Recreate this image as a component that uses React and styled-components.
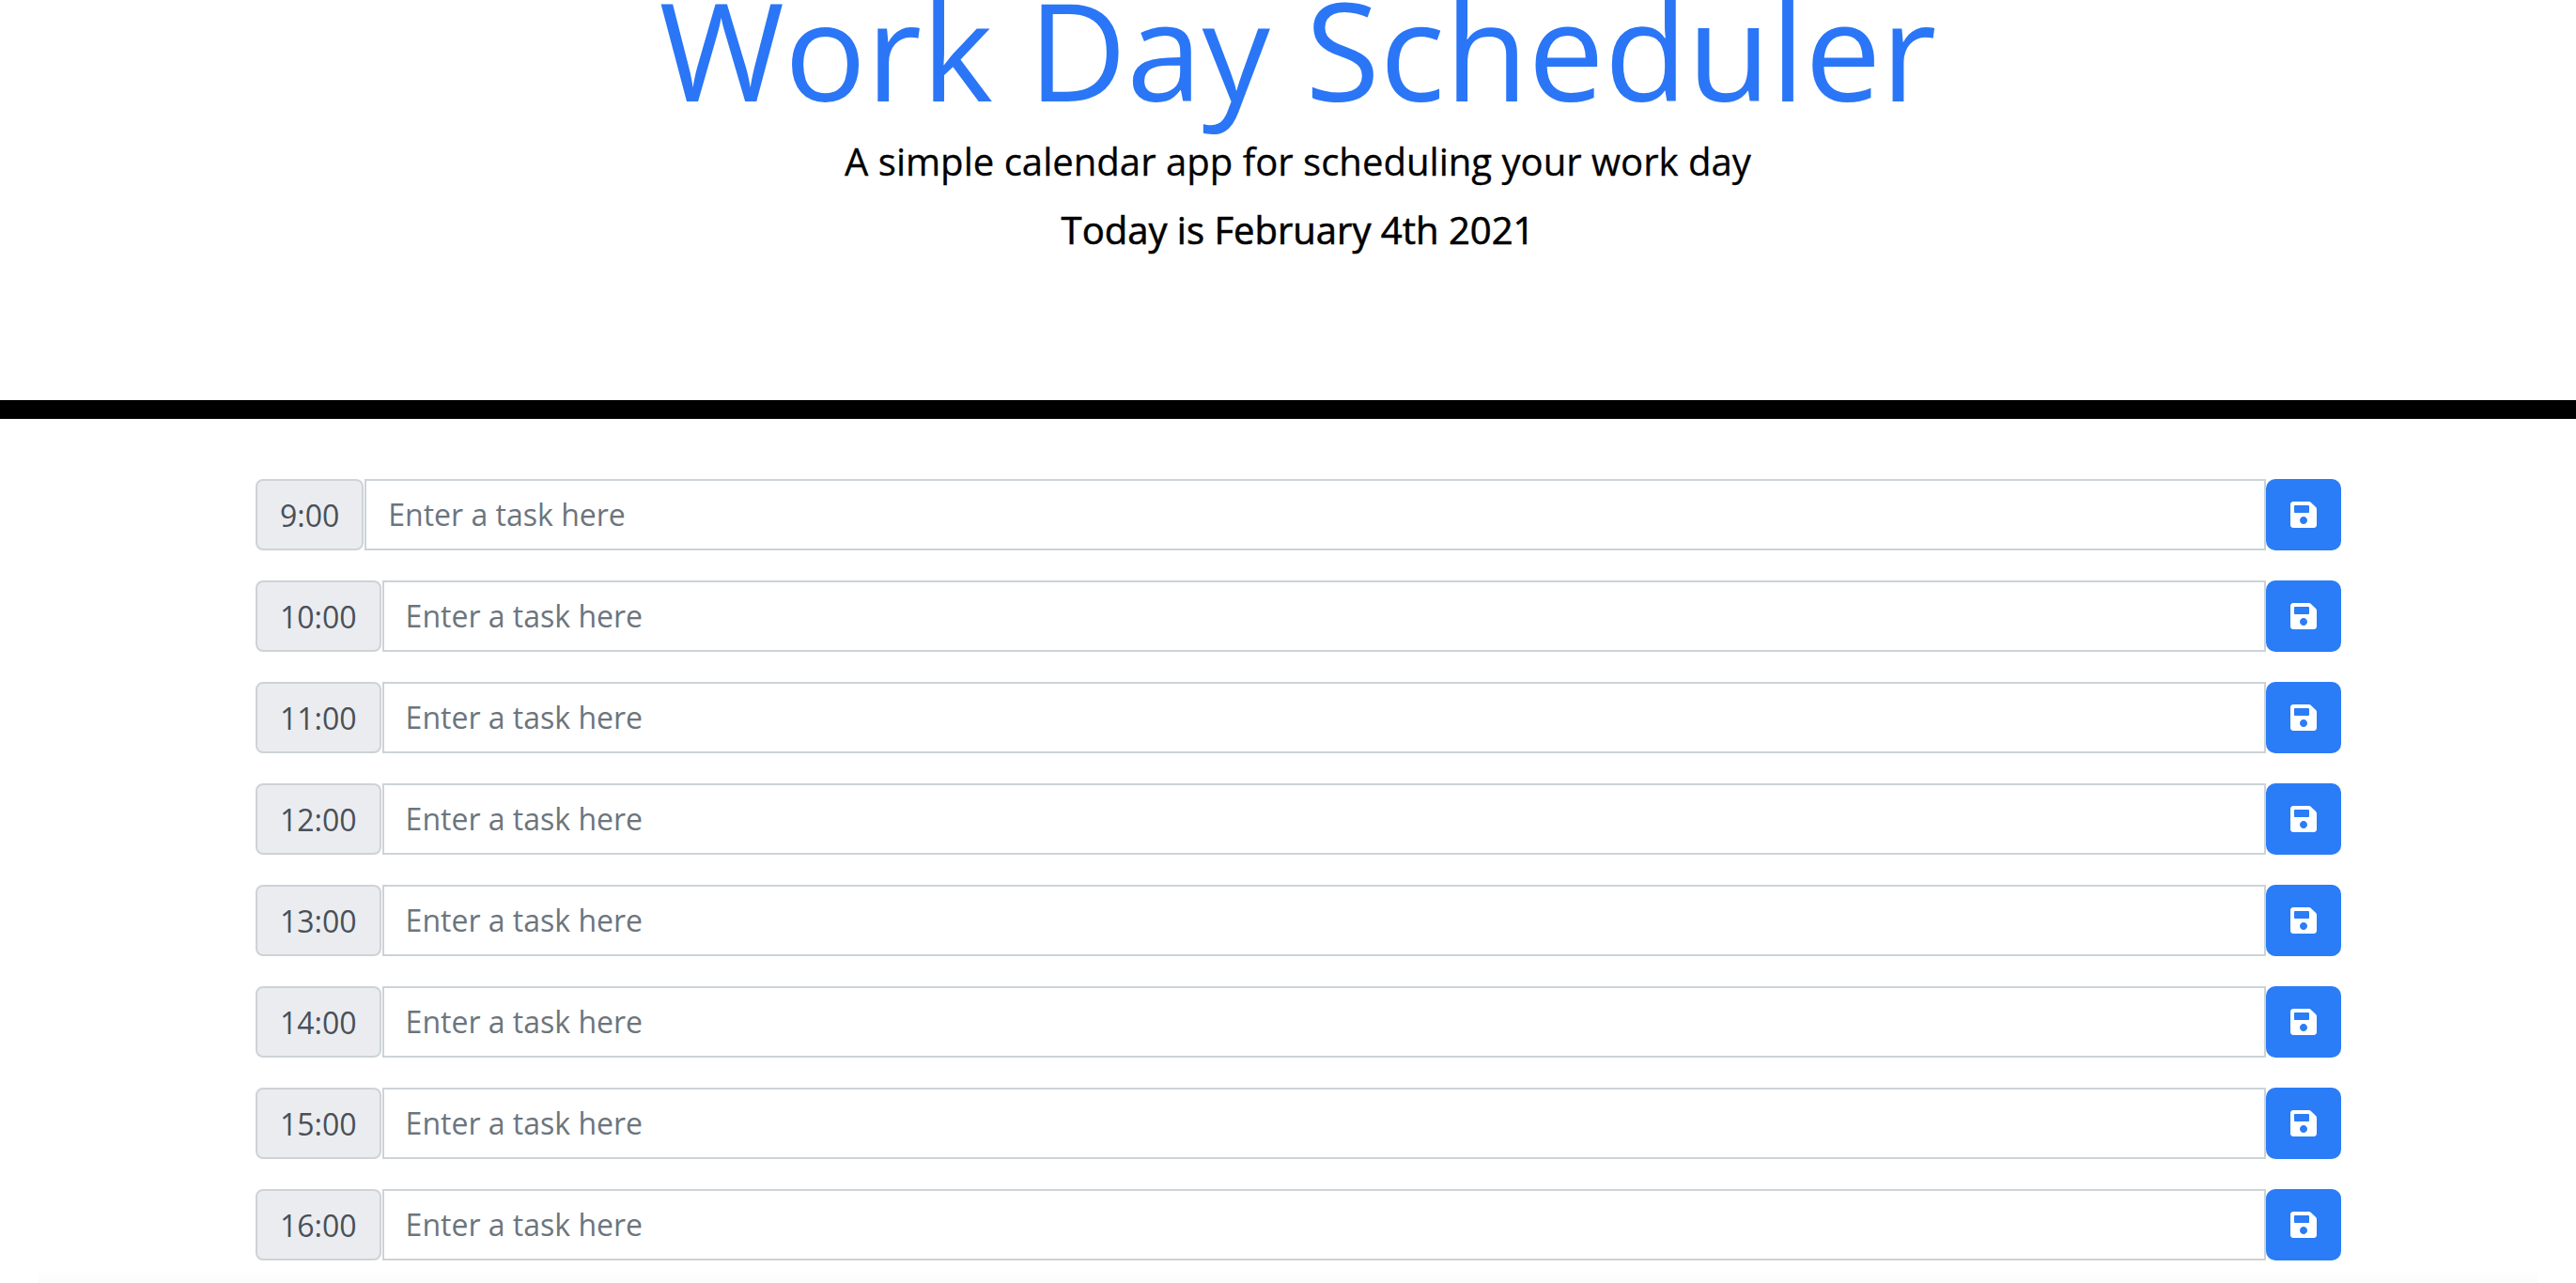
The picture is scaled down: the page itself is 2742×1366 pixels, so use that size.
import React from 'react';
import styled, { createGlobalStyle } from 'styled-components';
import { FaSave } from 'react-icons/fa';

const GlobalStyle = createGlobalStyle`
  * { box-sizing: border-box; }
  html, body {
    margin: 0;
    height: 100%;
    overflow: hidden;
    background: #fff;
    font-family: 'Open Sans', sans-serif;
  }
`;

const Header = styled.header`
  height: 446px;
  padding-left: 21px;
  border-bottom: 20px solid #000;
  text-align: center;
`;

const Title = styled.h1`
  margin: 0;
  height: 119px;
  font-size: 144.5px;
  font-weight: 400;
  line-height: 105px;
  white-space: nowrap;
  color: #2a76f6;
`;

const Lead = styled.p`
  margin: 23px 0 0;
  font-size: 40.1px;
  line-height: 60px;
  font-weight: 400;
  color: #000;
  -webkit-text-stroke: 0.3px #000;
`;

const Today = styled.p`
  margin: 13px 0 0;
  font-size: 40px;
  line-height: 60px;
  color: #000;
  -webkit-text-stroke: 0.6px #000;
`;

const Planner = styled.main`
  padding: 64px 250px 0 272px;
  display: flex;
  flex-direction: column;
  gap: 32px;
`;

const Row = styled.div`
  display: flex;
  height: 76px;
`;

const Hour = styled.span`
  display: flex;
  align-items: center;
  margin-right: 1px;
  padding: 0 24px;
  font-size: 32px;
  color: #495057;
  background: #ebecf0;
  border: 2px solid #cdd3d7;
  border-radius: 8px;
`;

const TaskInput = styled.input`
  flex: 1;
  min-width: 0;
  padding: 0 23px 2px;
  font-family: inherit;
  font-size: 32px;
  color: #495057;
  background: #fff;
  border: 2px solid #cdd3d7;
  border-radius: 0;
  outline: none;
  &::placeholder {
    color: #6c757d;
    opacity: 1;
  }
`;

const SaveButton = styled.button`
  width: 80px;
  display: flex;
  align-items: center;
  justify-content: center;
  padding: 0;
  color: #fff;
  background: #2a7df6;
  border: none;
  border-radius: 10px;
  font-size: 32px;
`;

const BottomFade = styled.div`
  height: 24px;
  margin: 0 40px;
  background: linear-gradient(#fff 40%, #fbfbfb);
`;

const hours = ['9:00', '10:00', '11:00', '12:00', '13:00', '14:00', '15:00', '16:00'];

const App = () => (
  <>
    <GlobalStyle />
    <Header>
      <Title>Work Day Scheduler</Title>
      <Lead>A simple calendar app for scheduling your work day</Lead>
      <Today>Today is February 4th 2021</Today>
    </Header>
    <Planner>
      {hours.map(hour => (
        <Row key={hour}>
          <Hour>{hour}</Hour>
          <TaskInput placeholder="Enter a task here" />
          <SaveButton aria-label="Save">
            <FaSave />
          </SaveButton>
        </Row>
      ))}
    </Planner>
    <BottomFade />
  </>
);

export default App;
